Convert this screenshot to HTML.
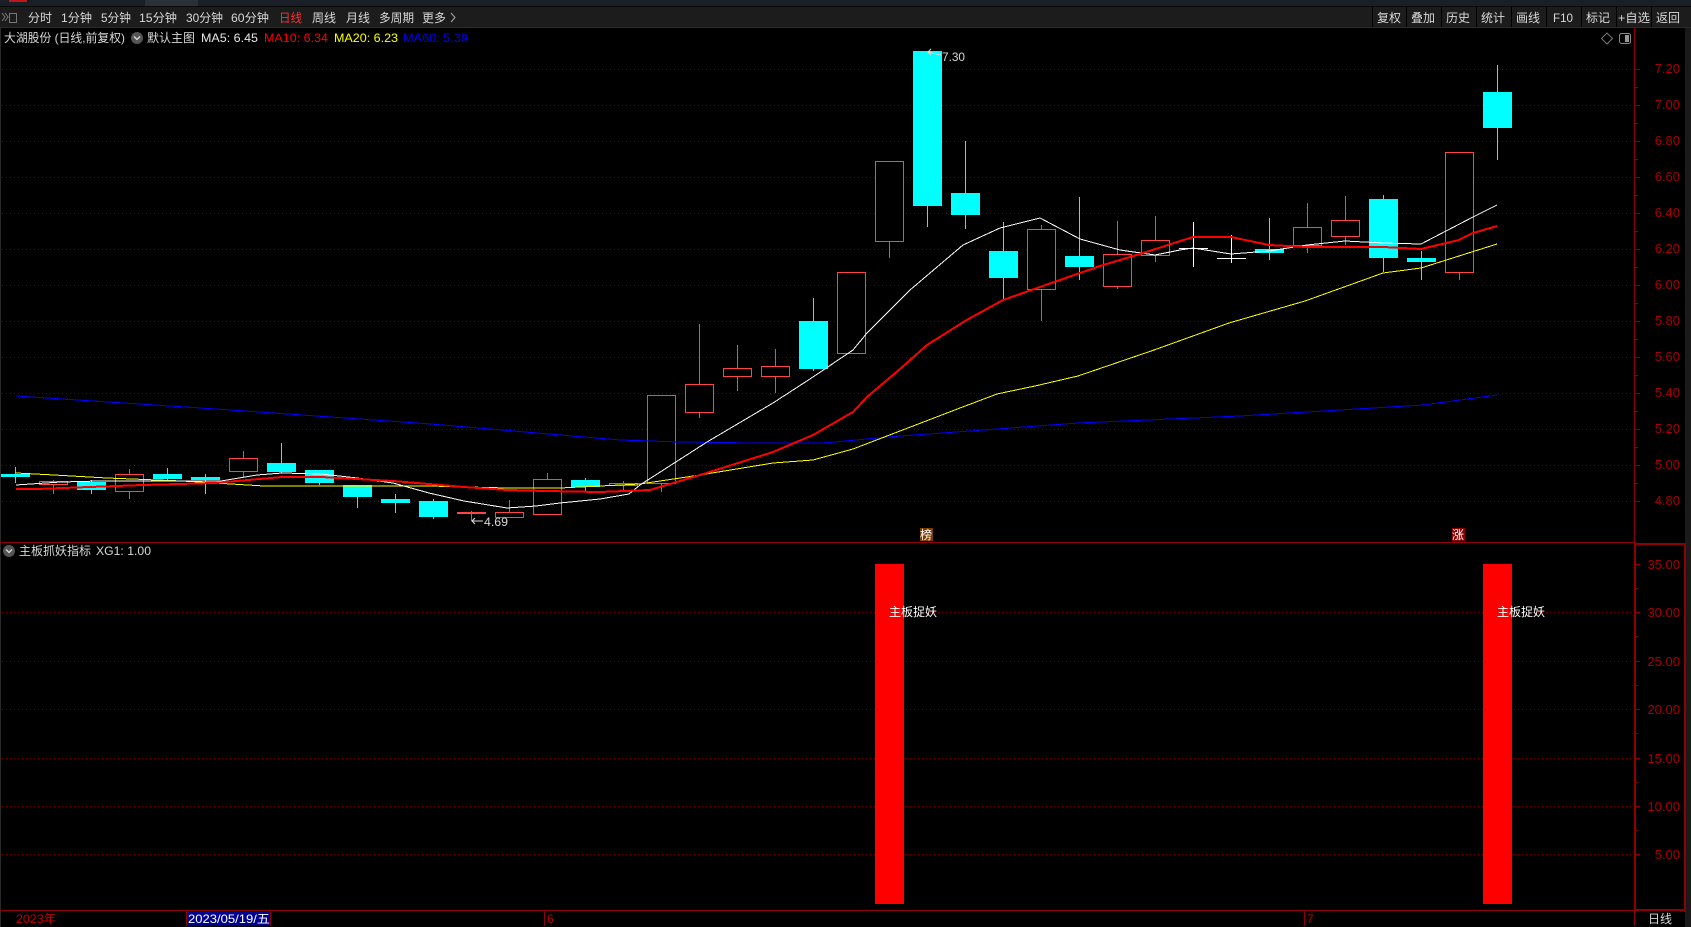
<!DOCTYPE html>
<html><head><meta charset="utf-8"><style>
html,body{margin:0;padding:0;background:#000;width:1691px;height:927px;overflow:hidden}
svg{display:block;font-family:"Liberation Sans","Noto Sans CJK SC",sans-serif;font-size:12px}
.c rect{fill:#0ff}.r rect{fill:#f44}.rb rect{fill:#000;stroke:#f44;stroke-width:1}
.g line{stroke:#7a0000;stroke-dasharray:1 3;stroke-width:1}
.ax{fill:#a80000}.t{fill:#d8d8d8}
.tk line{stroke:#8f0000}
</style></head><body>
<svg width="1691" height="927" viewBox="0 0 1691 927" xmlns="http://www.w3.org/2000/svg">
<rect width="1691" height="927" fill="#000"/>
<!-- title bar -->
<rect width="1691" height="6" fill="#1a1e26"/>
<rect x="145" width="53" height="6" fill="#2b3038"/>
<rect x="9" width="18" height="2" fill="#c01818"/>
<rect y="6" width="1691" height="1" fill="#0a0a0a"/>
<rect y="7" width="1691" height="20" fill="#1c1c1c"/>
<rect y="27" width="1691" height="1" fill="#2a2a2a"/>
<rect x="0" y="28" width="1" height="899" fill="#2a2a2a"/>
<rect x="1685" y="28" width="6" height="899" fill="#1a1a1a"/>
<!-- toolbar separators -->
<g fill="#000"><rect x="1372" y="7" width="1" height="20"/><rect x="1406" y="7" width="1" height="20"/><rect x="1441" y="7" width="1" height="20"/><rect x="1476" y="7" width="1" height="20"/><rect x="1511" y="7" width="1" height="20"/><rect x="1546" y="7" width="1" height="20"/><rect x="1581" y="7" width="1" height="20"/><rect x="1616" y="7" width="1" height="20"/><rect x="1651" y="7" width="1" height="20"/></g>
<!-- toolbar left icon -->
<g fill="none" stroke="#777" stroke-width="1"><rect x="9.500" y="13.500" width="7" height="9"/><path d="M2 13l3 4-3 4M5 13l3 4-3 4"/></g>
<g class="t">
<text x="28" y="22" textLength="24" lengthAdjust="spacingAndGlyphs">分时</text>
<text x="61" y="22" textLength="31" lengthAdjust="spacingAndGlyphs">1分钟</text>
<text x="101" y="22" textLength="30" lengthAdjust="spacingAndGlyphs">5分钟</text>
<text x="139" y="22" textLength="38" lengthAdjust="spacingAndGlyphs">15分钟</text>
<text x="186" y="22" textLength="37" lengthAdjust="spacingAndGlyphs">30分钟</text>
<text x="231" y="22" textLength="38" lengthAdjust="spacingAndGlyphs">60分钟</text>
<text x="279" y="22" textLength="23" lengthAdjust="spacingAndGlyphs" fill="#ff3030">日线</text>
<text x="312" y="22" textLength="24" lengthAdjust="spacingAndGlyphs">周线</text>
<text x="346" y="22" textLength="24" lengthAdjust="spacingAndGlyphs">月线</text>
<text x="379" y="22" textLength="35" lengthAdjust="spacingAndGlyphs">多周期</text>
<text x="422" y="22" textLength="24" lengthAdjust="spacingAndGlyphs">更多</text>
<text x="1377" y="22" textLength="24" lengthAdjust="spacingAndGlyphs">复权</text>
<text x="1411" y="22" textLength="24" lengthAdjust="spacingAndGlyphs">叠加</text>
<text x="1446" y="22" textLength="24" lengthAdjust="spacingAndGlyphs">历史</text>
<text x="1481" y="22" textLength="24" lengthAdjust="spacingAndGlyphs">统计</text>
<text x="1516" y="22" textLength="24" lengthAdjust="spacingAndGlyphs">画线</text>
<text x="1553" y="22" textLength="20" lengthAdjust="spacingAndGlyphs">F10</text>
<text x="1586" y="22" textLength="24" lengthAdjust="spacingAndGlyphs">标记</text>
<text x="1618" y="22" textLength="32" lengthAdjust="spacingAndGlyphs">+自选</text>
<text x="1656" y="22" textLength="24" lengthAdjust="spacingAndGlyphs">返回</text>
</g>
<path d="M451 13l4 4.500-4 4.500" fill="none" stroke="#aaa"/>
<!-- header -->
<text x="4" y="42" class="t" textLength="121" lengthAdjust="spacingAndGlyphs">大湖股份 (日线,前复权)</text>
<circle cx="137" cy="38" r="6" fill="#555"/><path d="M134 36.500l3 3 3-3" fill="none" stroke="#ddd" stroke-width="1.300"/>
<text x="147" y="42" class="t" textLength="48" lengthAdjust="spacingAndGlyphs">默认主图</text>
<text x="201" y="42" fill="#e8e8e8" textLength="57" lengthAdjust="spacingAndGlyphs">MA5: 6.45</text>
<text x="264" y="42" fill="#f00" textLength="64" lengthAdjust="spacingAndGlyphs">MA10: 6.34</text>
<text x="334" y="42" fill="#ff0" textLength="64" lengthAdjust="spacingAndGlyphs">MA20: 6.23</text>
<text x="403" y="42" fill="#0000f0" textLength="65" lengthAdjust="spacingAndGlyphs">MA60: 5.39</text>
<path d="M1607 33l5.500 5.500-5.500 5.500-5.500-5.500z" fill="none" stroke="#777"/>
<rect x="1619.500" y="33.500" width="11" height="10" rx="2" fill="none" stroke="#888"/><rect x="1625" y="35" width="4" height="7" fill="#999"/>
<!-- grid -->
<g class="g" shape-rendering="crispEdges">
<line x1="2" x2="1634" y1="69.500" y2="69.500"/><line x1="2" x2="1634" y1="105.500" y2="105.500"/><line x1="2" x2="1634" y1="141.500" y2="141.500"/><line x1="2" x2="1634" y1="177.500" y2="177.500"/><line x1="2" x2="1634" y1="213.500" y2="213.500"/><line x1="2" x2="1634" y1="249.500" y2="249.500"/><line x1="2" x2="1634" y1="285.500" y2="285.500"/><line x1="2" x2="1634" y1="321.500" y2="321.500"/><line x1="2" x2="1634" y1="357.500" y2="357.500"/><line x1="2" x2="1634" y1="393.500" y2="393.500"/><line x1="2" x2="1634" y1="429.500" y2="429.500"/><line x1="2" x2="1634" y1="465.500" y2="465.500"/><line x1="2" x2="1634" y1="501.500" y2="501.500"/>
<line x1="2" x2="1634" y1="612.500" y2="612.500"/><line x1="2" x2="1634" y1="661.500" y2="661.500"/><line x1="2" x2="1634" y1="709.500" y2="709.500"/><line x1="2" x2="1634" y1="758.500" y2="758.500"/><line x1="2" x2="1634" y1="806.500" y2="806.500"/><line x1="2" x2="1634" y1="854.500" y2="854.500"/>
</g>
<!-- wicks cyan -->
<g class="c" shape-rendering="crispEdges">
<rect x="15" y="467" width="1" height="16"/><rect x="91" y="480" width="1" height="14"/><rect x="167" y="468" width="1" height="13"/><rect x="205" y="474" width="1" height="20"/><rect x="281" y="443" width="1" height="30"/><rect x="319" y="470" width="1" height="15"/><rect x="357" y="485" width="1" height="23"/><rect x="395" y="494" width="1" height="19"/><rect x="433" y="499" width="1" height="20"/><rect x="585" y="478" width="1" height="14"/><rect x="813" y="298" width="1" height="73"/><rect x="927" y="51" width="1" height="176"/><rect x="965" y="141" width="1" height="88"/><rect x="1003" y="222" width="1" height="77"/><rect x="1079" y="197" width="1" height="83"/><rect x="1269" y="218" width="1" height="42"/><rect x="1383" y="195" width="1" height="77"/><rect x="1421" y="251" width="1" height="29"/><rect x="1497" y="65" width="1" height="95"/>
<!-- bodies -->
<rect x="1" y="474" width="29" height="3"/><rect x="77" y="482" width="29" height="8"/><rect x="153" y="474" width="29" height="5"/><rect x="191" y="477" width="29" height="3"/><rect x="267" y="463" width="29" height="9"/><rect x="305" y="470" width="29" height="13"/><rect x="343" y="485" width="29" height="12"/><rect x="381" y="499" width="29" height="4"/><rect x="419" y="501" width="29" height="16"/><rect x="571" y="480" width="29" height="7"/><rect x="799" y="321" width="29" height="48"/><rect x="913" y="51" width="29" height="155"/><rect x="951" y="193" width="29" height="22"/><rect x="989" y="251" width="29" height="27"/><rect x="1065" y="256" width="29" height="11"/><rect x="1255" y="249" width="29" height="4"/><rect x="1369" y="199" width="29" height="59"/><rect x="1407" y="258" width="29" height="4"/><rect x="1483" y="92" width="29" height="36"/>
</g>
<!-- wicks red -->
<g class="r" shape-rendering="crispEdges">
<rect x="53" y="480" width="1" height="14"/><rect x="129" y="469" width="1" height="30"/><rect x="243" y="451" width="1" height="26"/><rect x="471" y="511" width="1" height="10"/><rect x="509" y="500" width="1" height="18"/><rect x="547" y="473" width="1" height="41"/><rect x="623" y="481" width="1" height="9"/><rect x="661" y="483" width="1" height="9"/><rect x="699" y="324" width="1" height="94"/><rect x="737" y="345" width="1" height="46"/><rect x="775" y="349" width="1" height="44"/><rect x="889" y="161" width="1" height="97"/><rect x="1041" y="225" width="1" height="96"/><rect x="1117" y="221" width="1" height="68"/><rect x="1155" y="216" width="1" height="46"/><rect x="1307" y="203" width="1" height="50"/><rect x="1345" y="196" width="1" height="49"/><rect x="1459" y="152" width="1" height="128"/>
</g>
<g class="rb" shape-rendering="crispEdges">
<rect x="39.500" y="481.500" width="28" height="3"/><rect x="115.500" y="474.500" width="28" height="17"/><rect x="229.500" y="458.500" width="28" height="13"/><rect x="457.500" y="512.500" width="28" height="1"/><rect x="495.500" y="512.500" width="28" height="5"/><rect x="533.500" y="479.500" width="28" height="35"/><rect x="609.500" y="483.500" width="28" height="2"/><rect x="647.500" y="395.500" width="28" height="88"/><rect x="685.500" y="384.500" width="28" height="28"/><rect x="723.500" y="368.500" width="28" height="8"/><rect x="761.500" y="366.500" width="28" height="10"/><rect x="837.500" y="272.500" width="28" height="81"/><rect x="875.500" y="161.500" width="28" height="80"/><rect x="1027.500" y="229.500" width="28" height="60"/><rect x="1103.500" y="254.500" width="28" height="32"/><rect x="1141.500" y="240.500" width="28" height="15"/><rect x="1293.500" y="227.500" width="28" height="18"/><rect x="1331.500" y="220.500" width="28" height="16"/><rect x="1445.500" y="152.500" width="28" height="120"/>
</g>
<!-- doji -->
<g fill="#fff" shape-rendering="crispEdges"><rect x="1193" y="222" width="1" height="45"/><rect x="1179" y="248" width="29" height="1"/><rect x="1231" y="235" width="1" height="28"/><rect x="1217" y="258" width="29" height="1"/></g>
<!-- MA lines -->
<g fill="none" shape-rendering="crispEdges">
<polyline stroke="#0000ff" stroke-width="1" points="16,396 216,409 431,424 620,440 680,442 757,443 823,443 900,436 970,431 1078,423 1240,416 1423,405 1497,395"/>
<polyline stroke="#ffff00" stroke-width="1" points="16,473 54,475 107,478 182,481 264,486 429,486 507,488 560,488 640,484 700,475 773,463 813,460 853,449 900,431 960,408 997,394 1035,386 1078,376 1154,350 1229,323 1305,301 1383,273 1421,268 1497,244"/>
<polyline stroke="#ffffff" stroke-width="1" points="16,485 61,482 100,481 143,481 182,481 221,481 257,475 282,473 321,474 357,478 393,483 429,493 464,501 507,508 536,506 560,503 600,499 629,494 640,485 707,442 773,403 813,377 853,350 867,333 900,300 910,290 963,245 1000,228 1040,218 1080,239 1120,250 1155,255 1180,250 1193,248 1231,254 1269,251 1307,245 1345,241 1383,243 1421,244 1473,217 1497,205"/>
<polyline stroke="#ff0000" stroke-width="2" points="16,489 36,489 143,485 214,483 282,477 321,477 357,479 393,481 429,484 464,487 507,490 546,491 600,492 650,490 700,475 773,452 813,435 853,412 867,397 900,369 927,345 965,321 1003,300 1040,287 1100,266 1140,254 1193,237 1231,237 1269,245 1307,247 1345,247 1383,247 1421,249 1459,240 1473,233 1497,226"/>
</g>
<!-- extreme labels -->
<path d="M483 521H472M475 518l-3 3 3 3" fill="none" stroke="#ddd"/>
<text x="484" y="526" class="t" textLength="24" lengthAdjust="spacingAndGlyphs">4.69</text>
<path d="M941 55L928 52M931 49l-3 3 3 3" fill="none" stroke="#ddd"/>
<text x="942" y="61" class="t" textLength="23" lengthAdjust="spacingAndGlyphs">7.30</text>
<!-- tags -->
<rect x="920" y="528" width="13" height="13" fill="#7a3c00"/><text x="920" y="539" fill="#fff" font-size="12">榜</text>
<rect x="1452" y="528" width="13" height="13" fill="#8b0000"/><text x="1452" y="539" fill="#fff" font-size="12">涨</text>
<!-- pane frame -->
<g fill="#8f0000" shape-rendering="crispEdges">
<rect x="1634" y="28" width="1" height="515"/>
<rect x="0" y="542" width="1635" height="1"/>
<rect x="1634" y="542" width="2" height="369"/>
<rect x="1636" y="543" width="49" height="2"/>
<rect x="1684" y="543" width="2" height="369"/>
<rect x="0" y="910" width="1686" height="1"/>
<rect x="1636" y="909" width="50" height="2"/>
<rect x="1634" y="911" width="1" height="15"/>
</g>
<!-- ticks -->
<g class="tk" shape-rendering="crispEdges">
<line x1="1635" x2="1640" y1="69.500" y2="69.500"/><line x1="1635" x2="1640" y1="105.500" y2="105.500"/><line x1="1635" x2="1640" y1="141.500" y2="141.500"/><line x1="1635" x2="1640" y1="177.500" y2="177.500"/><line x1="1635" x2="1640" y1="213.500" y2="213.500"/><line x1="1635" x2="1640" y1="249.500" y2="249.500"/><line x1="1635" x2="1640" y1="285.500" y2="285.500"/><line x1="1635" x2="1640" y1="321.500" y2="321.500"/><line x1="1635" x2="1640" y1="357.500" y2="357.500"/><line x1="1635" x2="1640" y1="393.500" y2="393.500"/><line x1="1635" x2="1640" y1="429.500" y2="429.500"/><line x1="1635" x2="1640" y1="465.500" y2="465.500"/><line x1="1635" x2="1640" y1="501.500" y2="501.500"/>
<line x1="1635" x2="1638" y1="87.500" y2="87.500"/><line x1="1635" x2="1638" y1="123.500" y2="123.500"/><line x1="1635" x2="1638" y1="159.500" y2="159.500"/><line x1="1635" x2="1638" y1="195.500" y2="195.500"/><line x1="1635" x2="1638" y1="231.500" y2="231.500"/><line x1="1635" x2="1638" y1="267.500" y2="267.500"/><line x1="1635" x2="1638" y1="303.500" y2="303.500"/><line x1="1635" x2="1638" y1="339.500" y2="339.500"/><line x1="1635" x2="1638" y1="375.500" y2="375.500"/><line x1="1635" x2="1638" y1="411.500" y2="411.500"/><line x1="1635" x2="1638" y1="447.500" y2="447.500"/><line x1="1635" x2="1638" y1="483.500" y2="483.500"/>
<line x1="1636" x2="1640" y1="564.500" y2="564.500"/><line x1="1636" x2="1640" y1="612.500" y2="612.500"/><line x1="1636" x2="1640" y1="661.500" y2="661.500"/><line x1="1636" x2="1640" y1="709.500" y2="709.500"/><line x1="1636" x2="1640" y1="758.500" y2="758.500"/><line x1="1636" x2="1640" y1="806.500" y2="806.500"/><line x1="1636" x2="1640" y1="854.500" y2="854.500"/>
<line x1="1636" x2="1638" y1="588.500" y2="588.500"/><line x1="1636" x2="1638" y1="636.500" y2="636.500"/><line x1="1636" x2="1638" y1="685.500" y2="685.500"/><line x1="1636" x2="1638" y1="733.500" y2="733.500"/><line x1="1636" x2="1638" y1="782.500" y2="782.500"/><line x1="1636" x2="1638" y1="830.500" y2="830.500"/>
</g>
<!-- axis labels -->
<g class="ax" text-anchor="end" font-size="13">
<text x="1680" y="73">7.20</text><text x="1680" y="109">7.00</text><text x="1680" y="145">6.80</text><text x="1680" y="181">6.60</text><text x="1680" y="217">6.40</text><text x="1680" y="253">6.20</text><text x="1680" y="289">6.00</text><text x="1680" y="325">5.80</text><text x="1680" y="361">5.60</text><text x="1680" y="397">5.40</text><text x="1680" y="433">5.20</text><text x="1680" y="469">5.00</text><text x="1680" y="505">4.80</text>
<text x="1680" y="569">35.00</text><text x="1680" y="617">30.00</text><text x="1680" y="666">25.00</text><text x="1680" y="714">20.00</text><text x="1680" y="763">15.00</text><text x="1680" y="811">10.00</text><text x="1680" y="859">5.00</text>
</g>
<!-- lower pane -->
<circle cx="9" cy="551" r="6" fill="#555"/><path d="M6 549.500l3 3 3-3" fill="none" stroke="#ddd" stroke-width="1.300"/>
<text x="19" y="555" class="t" textLength="72" lengthAdjust="spacingAndGlyphs">主板抓妖指标</text>
<text x="96" y="555" class="t" textLength="55" lengthAdjust="spacingAndGlyphs">XG1: 1.00</text>
<rect x="875" y="564" width="29" height="340" fill="#f00"/>
<rect x="1483" y="564" width="29" height="340" fill="#f00"/>
<text x="889" y="616" fill="#fff" textLength="48" lengthAdjust="spacingAndGlyphs">主板捉妖</text>
<text x="1497" y="616" fill="#fff" textLength="48" lengthAdjust="spacingAndGlyphs">主板捉妖</text>
<!-- bottom axis -->
<text x="16" y="923" fill="#c00000" textLength="40" lengthAdjust="spacingAndGlyphs">2023年</text>
<rect x="187" y="911" width="84" height="14" fill="#000090"/>
<rect x="186" y="911" width="1" height="15" fill="#8f0000"/><rect x="270" y="911" width="1" height="15" fill="#8f0000"/>
<text x="188" y="923" fill="#fff" textLength="82" lengthAdjust="spacingAndGlyphs">2023/05/19/五</text>
<rect x="544" y="911" width="1" height="15" fill="#8f0000"/><text x="547" y="923" fill="#c00000">6</text>
<rect x="1304" y="911" width="1" height="15" fill="#8f0000"/><text x="1307" y="923" fill="#c00000">7</text>
<text x="1648" y="923" class="t" textLength="24" lengthAdjust="spacingAndGlyphs">日线</text>
</svg>
</body></html>
